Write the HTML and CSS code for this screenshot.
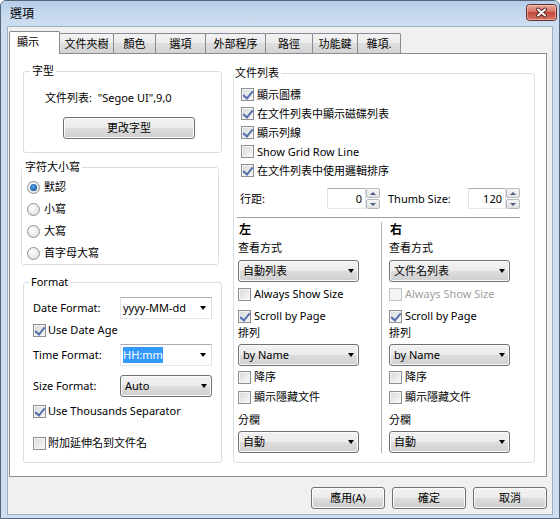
FILE: index.html
```html
<!DOCTYPE html>
<html lang="zh-Hant">
<head>
<meta charset="utf-8">
<title>選項</title>
<link rel="stylesheet" href="styles.css">
</head>
<body>
<div class="window">
  <div class="titlebar">
    <span class="title">選項</span>
    <div class="close" aria-label="關閉">
      <svg width="31" height="17" viewBox="0 0 31 17">
        <defs>
          <linearGradient id="cg" x1="0" y1="0" x2="0" y2="1">
            <stop offset="0" stop-color="#eab0a4"/>
            <stop offset="0.45" stop-color="#d77263"/>
            <stop offset="0.5" stop-color="#c4493b"/>
            <stop offset="1" stop-color="#d47a69"/>
          </linearGradient>
        </defs>
        <rect x="0.5" y="0.5" width="30" height="16" rx="3" fill="url(#cg)" stroke="#6b2e2a"/>
        <rect x="1.5" y="1.5" width="28" height="14" rx="2" fill="none" stroke="#f6d0c8" stroke-opacity="0.55"/>
        <path d="M12 5.5 L19 11.5 M19 5.5 L12 11.5" stroke="#5a2320" stroke-width="4" stroke-linecap="round"/>
        <path d="M12 5.5 L19 11.5 M19 5.5 L12 11.5" stroke="#ffffff" stroke-width="2" stroke-linecap="round"/>
      </svg>
    </div>
  </div>
  <div class="frame">
    <div class="client">
      <div class="tabs">
        <div class="tab active t1">顯示</div>
        <div class="tab t2">文件夾樹</div>
        <div class="tab t3">顏色</div>
        <div class="tab t4">選項</div>
        <div class="tab t5">外部程序</div>
        <div class="tab t6">路徑</div>
        <div class="tab t7">功能鍵</div>
        <div class="tab t8">雜項.</div>
      </div>
      <div class="panel">
        <div class="col-left">
          <fieldset class="group g-font">
            <legend>字型</legend>
            <div class="body">
              <div class="font-name">文件列表:&nbsp; "Segoe UI",9,0</div>
              <div class="btn btn-font">更改字型</div>
            </div>
          </fieldset>
          <fieldset class="group g-case">
            <legend>字符大小寫</legend>
            <div class="body">
              <div class="radio-row"><span class="radio on"></span>默認</div>
              <div class="radio-row"><span class="radio"></span>小寫</div>
              <div class="radio-row"><span class="radio"></span>大寫</div>
              <div class="radio-row"><span class="radio"></span>首字母大寫</div>
            </div>
          </fieldset>
          <fieldset class="group g-format">
            <legend>Format</legend>
            <div class="body">
              <div class="form-row r-date"><span class="flabel">Date Format:</span><div class="combo edit"><span>yyyy-MM-dd</span><span class="arrow"></span></div></div>
              <div class="check-row r-age"><span class="check on"></span>Use Date Age</div>
              <div class="form-row r-time"><span class="flabel">Time Format:</span><div class="combo edit"><span class="sel">HH:mm</span><span class="arrow"></span></div></div>
              <div class="form-row r-size"><span class="flabel">Size Format:</span><div class="combo drop"><span>Auto</span><span class="arrow"></span></div></div>
              <div class="check-row r-thou"><span class="check on"></span>Use Thousands Separator</div>
              <div class="check-row r-ext"><span class="check"></span>附加延伸名到文件名</div>
            </div>
          </fieldset>
        </div>
        <fieldset class="group g-list">
          <legend>文件列表</legend>
          <div class="body">
            <div class="checks">
              <div class="check-row r19"><span class="check on"></span>顯示圖標</div>
              <div class="check-row r19"><span class="check on"></span>在文件列表中顯示磁碟列表</div>
              <div class="check-row r19"><span class="check on"></span>顯示列線</div>
              <div class="check-row r19"><span class="check"></span>Show Grid Row Line</div>
              <div class="check-row r19"><span class="check on"></span>在文件列表中使用邏輯排序</div>
            </div>
            <div class="spin-row">
              <span class="slabel">行距:</span>
              <div class="spin s1"><div class="spin-edit">0</div><div class="spin-btns"><span class="sb up"></span><span class="sb down"></span></div></div>
              <span class="slabel thumb">Thumb Size:</span>
              <div class="spin s2"><div class="spin-edit">120</div><div class="spin-btns"><span class="sb up"></span><span class="sb down"></span></div></div>
            </div>
            <div class="sep"></div>
            <div class="sides">
              <div class="side left">
                <div class="colhead">左</div>
                <div class="lbl m2">查看方式</div>
                <div class="combo drop m4"><span>自動列表</span><span class="arrow"></span></div>
                <div class="check-row m4"><span class="check"></span>Always Show Size</div>
                <div class="check-row m6"><span class="check on"></span>Scroll by Page</div>
                <div class="lbl m1">排列</div>
                <div class="combo drop m3"><span>by Name</span><span class="arrow"></span></div>
                <div class="check-row m3"><span class="check"></span>降序</div>
                <div class="check-row m4"><span class="check"></span>顯示隱藏文件</div>
                <div class="lbl m7">分欄</div>
                <div class="combo drop m3"><span>自動</span><span class="arrow"></span></div>
              </div>
              <div class="side right">
                <div class="colhead">右</div>
                <div class="lbl m2">查看方式</div>
                <div class="combo drop m4"><span>文件名列表</span><span class="arrow"></span></div>
                <div class="check-row m4 disabled"><span class="check"></span>Always Show Size</div>
                <div class="check-row m6"><span class="check on"></span>Scroll by Page</div>
                <div class="lbl m1">排列</div>
                <div class="combo drop m3"><span>by Name</span><span class="arrow"></span></div>
                <div class="check-row m3"><span class="check"></span>降序</div>
                <div class="check-row m4"><span class="check"></span>顯示隱藏文件</div>
                <div class="lbl m7">分欄</div>
                <div class="combo drop m3"><span>自動</span><span class="arrow"></span></div>
              </div>
            </div>
          </div>
        </fieldset>
      </div>
      <div class="buttons">
        <div class="btn dlg">應用(A)</div>
        <div class="btn dlg">確定</div>
        <div class="btn dlg">取消</div>
      </div>
    </div>
  </div>
</div>
</body>
</html>
```

FILE: styles.css
```css
* { box-sizing: border-box; }
html, body { margin: 0; padding: 0; }
body {
  width: 560px; height: 519px; overflow: hidden; background: #ffffff;
  font-family: "Noto Sans", "Noto Sans CJK TC", sans-serif;
  font-size: 11px; line-height: 16px; color: #000;
}

.window {
  width: 560px; height: 519px;
  border: 1px solid #56667a; border-radius: 6px 6px 0 0;
  background: #cbdcef;
  display: flex; flex-direction: column; overflow: hidden;
}
.titlebar {
  height: 25px; flex: none;
  display: flex; align-items: center;
  padding: 0 2px 0 9px;
  background: linear-gradient(#b7cee9, #c8daef 60%, #cddef1);
}
.title { flex: 1; font-size: 12px; }
.close { align-self: flex-start; margin-top: 3px; width: 31px; height: 17px; display: flex; }

.frame { flex: 1; display: flex; padding: 0 6px 3px 6px; background: #cddef1; }
.client {
  flex: 1; display: flex; flex-direction: column;
  border: 1px solid #9fb0c5; background: #f0f0f0;
  padding: 4px 5px 0 1px;
}

/* tabs */
.tabs { display: flex; align-items: flex-end; height: 23px; margin-bottom: -1px; position: relative; z-index: 1; }
.tab {
  height: 20px; margin-bottom: 1px; margin-left: -1px;
  border: 1px solid #898c95; border-bottom: none; border-radius: 2px 2px 0 0;
  background: linear-gradient(#f3f3f3, #ebebeb 50%, #dedede 50%, #d3d3d3);
  display: flex; align-items: center; justify-content: center; white-space: nowrap;
}
.tab.active {
  height: 23px; margin-bottom: 0; margin-left: 0;
  background: #ffffff; justify-content: flex-start; padding: 0 0 2px 7px;
}
.t1 { width: 51px; }
.t2 { width: 55px; }
.t3 { width: 43px; }
.t4 { width: 51px; }
.t5 { width: 61px; }
.t6 { width: 48px; }
.t7 { width: 46px; }
.t8 { width: 44px; }

.panel {
  height: 424px; border: 1px solid #898c95; background: #ffffff;
  display: grid; grid-template-columns: 199px 302px; column-gap: 11px; align-items: start;
  padding: 9px 11px 0 13px;
}
.col-left { display: flex; flex-direction: column; }

/* group boxes */
.group { border: 1px solid #d5dfe5; border-radius: 3px; margin: 0; padding: 0; min-width: 0; }
.group legend { padding: 0 2px; line-height: 16px; }
.g-font legend { margin-left: 6px; }
.g-case legend { margin-left: 1px; }
.g-format legend { margin-left: 5px; }
.g-list legend { margin-left: 0; padding: 0 2px 0 1px; }

.g-font .body { padding: 11px 0 13px 21px; }
.btn-font { margin: 11px 0 0 18px; width: 132px; height: 22px; }

.g-case { margin: 6px 0 0 -2px; width: 198px; }
.g-case .body { padding: 1px 0 0 5px; }
.radio-row { height: 22px; display: flex; align-items: center; }

.g-format { margin-top: 9px; }
.g-format .body { padding: 0 9px 11px 9px; }
.form-row { display: flex; align-items: center; height: 22px; }
.flabel { width: 87px; flex: none; }
.form-row .combo { width: 92px; }
.r-date { margin-top: 7px; }
.r-age { margin-top: 3px; }
.r-time { margin-top: 6px; }
.r-size { margin-top: 9px; }
.r-thou { margin-top: 6px; }
.r-ext { margin-top: 16px; }

.g-list { margin-top: 2px; }
.g-list .body { padding: 0 0 9px 4px; }
.checks { margin-top: 4px; padding-left: 3px; }

.spin-row { display: flex; align-items: center; height: 21px; margin-top: 8px; padding-left: 2px; }
.slabel { width: 87px; flex: none; }
.slabel.thumb { width: 80px; margin-left: 8px; }
.spin { display: flex; height: 21px; }
.spin-edit {
  height: 21px; background: #fff;
  border: 1px solid; border-color: #abadb3 #dbdfe6 #e3e9ef #e2e3ea;
  text-align: right; padding-right: 3px; line-height: 19px;
}
.s1 .spin-edit { width: 39px; }
.s2 .spin-edit { width: 38px; }
.spin-btns { width: 14px; display: flex; flex-direction: column; gap: 1px; }
.sb {
  flex: 1; border: 1px solid #b5b8bd; border-radius: 2px;
  background: linear-gradient(#f6f6f6, #e2e2e2);
  display: flex; align-items: center; justify-content: center;
}
.sb::before { content: ""; border-left: 3px solid transparent; border-right: 3px solid transparent; }
.sb.up::before { border-bottom: 3px solid #4a5d80; }
.sb.down::before { border-top: 3px solid #4a5d80; }

.sep { margin: 8px 0 0 -1px; width: 283px; height: 2px; border-top: 1px solid #a0a0a0; border-bottom: 1px solid #ffffff; }
.sides { display: grid; grid-template-columns: 143px 1fr; margin-top: 3px; }
.side { display: flex; flex-direction: column; align-items: flex-start; }
.side.right { border-left: 1px solid #b4b4b4; padding-left: 7px; }
.colhead { font-weight: bold; font-size: 12px; padding-left: 1px; }
.side .combo { width: 121px; }
.m1 { margin-top: 1px; } .m2 { margin-top: 2px; } .m3 { margin-top: 3px; }
.m4 { margin-top: 4px; } .m6 { margin-top: 6px; } .m7 { margin-top: 7px; }

/* controls */
.check-row { display: flex; align-items: center; height: 16px; white-space: nowrap; }
.check-row.r19 { height: 19px; }
.check {
  position: relative; flex: none; width: 13px; height: 13px; margin-right: 3px;
  border: 1px solid #8e8f8f;
  background: linear-gradient(135deg, #d6d8db, #f9f9f9);
  box-shadow: inset 0 0 0 1px #f4f4f4;
}
.check.on::after {
  content: ""; position: absolute; left: 3px; top: 0px; width: 4px; height: 8px;
  border: solid #5570ad; border-width: 0 2px 2px 0; transform: rotate(40deg);
}
.r-age .check, .r-thou .check, .r-ext .check { margin-right: 2px; }
.disabled { color: #a0a0a0; }
.disabled .check { border-color: #c5c5c5; background: #f4f4f4; }

.radio {
  position: relative; flex: none; width: 13px; height: 13px; margin-right: 4px;
  border: 1px solid #8e8f8f; border-radius: 50%;
  background: radial-gradient(circle at 40% 35%, #ffffff, #d9dadc);
}
.radio.on::after {
  content: ""; position: absolute; left: 2px; top: 2px; width: 7px; height: 7px; border-radius: 50%;
  background: radial-gradient(circle at 45% 40%, #5fa6e8, #1a5ca8 70%, #2f6fb5);
}

.btn {
  height: 22px; border: 1px solid #707070; border-radius: 3px;
  background: linear-gradient(#f2f2f2, #ebebeb 49%, #dddddd 50%, #cfcfcf);
  box-shadow: inset 0 0 0 1px #fbfbfb;
  display: flex; align-items: center; justify-content: center;
}
.combo {
  height: 22px; flex: none; display: flex; align-items: center; justify-content: space-between;
  white-space: nowrap;
}
.combo.drop {
  border: 1px solid #707070; border-radius: 3px;
  background: linear-gradient(#f2f2f2, #ebebeb 49%, #dddddd 50%, #cfcfcf);
  box-shadow: inset 0 0 0 1px #fbfbfb;
  padding: 0 4px 0 4px;
}
.combo.edit {
  background: #ffffff; border: 1px solid; border-color: #abadb3 #dbdfe6 #e3e9ef #e2e3ea;
  padding: 0 5px 0 2px;
}
.arrow { width: 0; height: 0; border-left: 3.5px solid transparent; border-right: 3.5px solid transparent; border-top: 4px solid #000; }
.sel { background: #3399ff; color: #ffffff; }

.buttons { display: flex; justify-content: flex-end; gap: 7px; margin-top: 10px; }
.btn.dlg { width: 74px; }
```
